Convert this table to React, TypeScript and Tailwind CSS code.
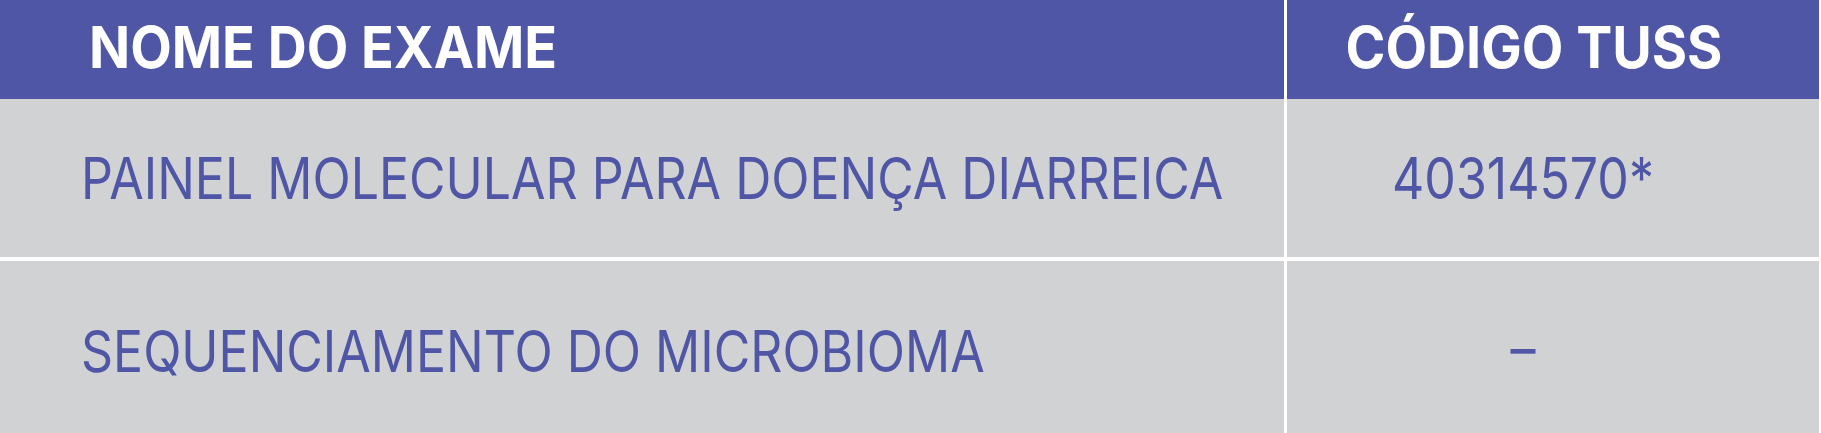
const rows = [
  { name: 'PAINEL MOLECULAR PARA DOENÇA DIARREICA', code: '40314570*' },
  { name: 'SEQUENCIAMENTO DO MICROBIOMA', code: '–' },
];

export default function App() {
  return (
    <div className="w-[1821px] h-[433px] overflow-hidden bg-white font-['Inter',sans-serif]">
      <div className="grid grid-cols-[1284px_532px] gap-x-[3px]">
        <div className="h-[99px] bg-[#4f56a5] flex items-center pl-[89px] pb-[4px]">
          <span className="text-[54px] font-bold text-white leading-none scale-y-[1.07]">NOME DO EXAME</span>
        </div>
        <div className="h-[99px] bg-[#4f56a5] flex items-center justify-center pr-[38px] pb-[4px]">
          <span className="text-[54px] font-bold text-white leading-none scale-y-[1.07]">CÓDIGO TUSS</span>
        </div>
        {rows.map((r, i) => (
          <div key={i} className="contents">
            <div className={`bg-[#d1d2d4] flex items-center pl-[81px] ${i === 0 ? 'h-[158px]' : 'h-[172px] mt-[4px] pt-[8px]'}`}>
              <span className="text-[50px] font-normal text-[#4f56a5] leading-none scale-y-[1.15]">{r.name}</span>
            </div>
            <div className={`bg-[#d1d2d4] flex items-center justify-center pr-[60px] ${i === 0 ? 'h-[158px]' : 'h-[172px] mt-[4px] pt-[2px]'}`}>
              <span className="text-[50px] font-normal text-[#4f56a5] leading-none scale-y-[1.15]">{r.code}</span>
            </div>
          </div>
        ))}
      </div>
    </div>
  );
}
